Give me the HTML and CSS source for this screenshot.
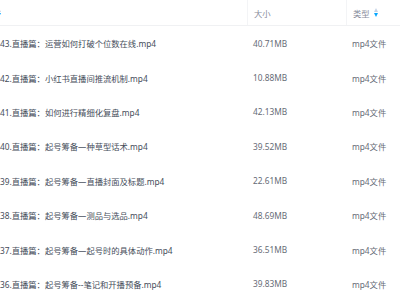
FILE: index.html
```html
<!DOCTYPE html>
<html lang="zh-CN">
<head>
  <meta charset="UTF-8">
  <title>文件列表</title>
  <link rel="stylesheet" href="styles.css">
</head>
<body>
  <div class="list">
    <div class="head">
      <div class="cell name"><span class="sort sort-cut"><i class="up"></i><i class="down"></i></span></div>
      <div class="cell size">大小</div>
      <div class="cell type">类型 <span class="sort"><i class="up"></i><i class="down"></i></span></div>
    </div>
    <div class="row">
      <div class="cell name">43.直播篇：运营如何打破个位数在线.mp4</div>
      <div class="cell size">40.71MB</div>
      <div class="cell type">mp4文件</div>
    </div>
    <div class="row">
      <div class="cell name">42.直播篇：小红书直播间推流机制.mp4</div>
      <div class="cell size">10.88MB</div>
      <div class="cell type">mp4文件</div>
    </div>
    <div class="row">
      <div class="cell name">41.直播篇：如何进行精细化复盘.mp4</div>
      <div class="cell size">42.13MB</div>
      <div class="cell type">mp4文件</div>
    </div>
    <div class="row">
      <div class="cell name">40.直播篇：起号筹备—种草型话术.mp4</div>
      <div class="cell size">39.52MB</div>
      <div class="cell type">mp4文件</div>
    </div>
    <div class="row">
      <div class="cell name">39.直播篇：起号筹备—直播封面及标题.mp4</div>
      <div class="cell size">22.61MB</div>
      <div class="cell type">mp4文件</div>
    </div>
    <div class="row">
      <div class="cell name">38.直播篇：起号筹备—测品与选品.mp4</div>
      <div class="cell size">48.69MB</div>
      <div class="cell type">mp4文件</div>
    </div>
    <div class="row">
      <div class="cell name">37.直播篇：起号筹备—起号时的具体动作.mp4</div>
      <div class="cell size">36.51MB</div>
      <div class="cell type">mp4文件</div>
    </div>
    <div class="row">
      <div class="cell name">36.直播篇：起号筹备--笔记和开播预备.mp4</div>
      <div class="cell size">39.83MB</div>
      <div class="cell type">mp4文件</div>
    </div>
  </div>
</body>
</html>
```

FILE: styles.css
```css
body {
  margin: 0;
  background: #fff;
  font-family: "Noto Sans", "Noto Sans CJK SC", sans-serif;
  font-size: 8.3px;
  overflow: hidden;
}
.list {
  width: 400px;
}
.head,
.row {
  display: grid;
  grid-template-columns: 247px 99px 1fr;
}
.head {
  height: 25px;
  border-bottom: 1px solid #f0f1f3;
  color: #878c9c;
}
.head .cell + .cell {
  border-left: 1px solid #f3f4f6;
}
.row {
  height: 34.4px;
  color: #454d5a;
}
.cell {
  display: flex;
  align-items: center;
  white-space: nowrap;
  overflow: hidden;
}
.size,
.type {
  padding-left: 6px;
}
.row .size,
.row .type {
  color: #666b76;
}
.sort {
  display: inline-flex;
  flex-direction: column;
  gap: 1px;
  margin-left: 4px;
}
.sort-cut {
  margin-left: -3px;
}
.sort i {
  width: 0;
  height: 0;
  border-left: 2px solid transparent;
  border-right: 2px solid transparent;
}
.sort .up {
  border-bottom: 4px solid #c5d3e6;
}
.sort .down {
  border-top: 4px solid #06a7ff;
}
```
